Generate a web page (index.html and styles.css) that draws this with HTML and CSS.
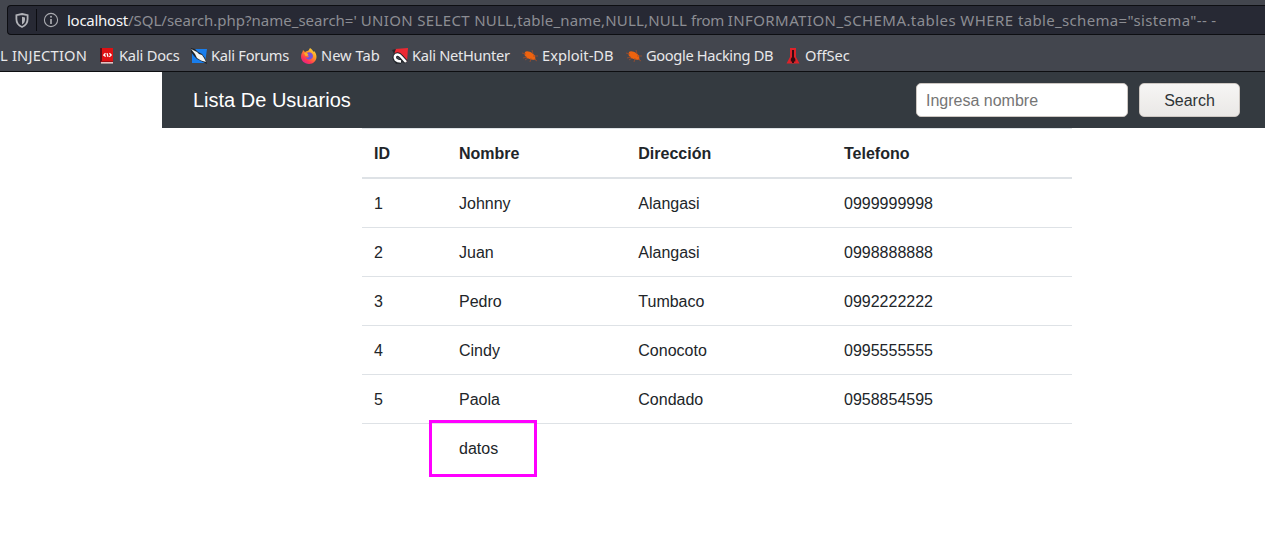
FILE: index.html
```html
<!DOCTYPE html>
<html lang="es">
<head>
<meta charset="utf-8">
<title>Lista De Usuarios</title>
<link rel="stylesheet" href="styles.css">
</head>
<body>
<header class="browser">
  <div class="urlbar">
    <svg class="shield" width="14" height="15" viewBox="0 0 14 15"><path d="M7 1 L12.6 2.2 V6 C12.6 9.8 10.8 12.5 7 14 C3.2 12.5 1.4 9.8 1.4 6 V2.2Z" fill="none" stroke="#b2b3b8" stroke-width="1.8"/><path d="M7 3.7 L10 4.4 V6.4 C10 8.6 9 10.3 7 11.4Z" fill="#b2b3b8"/></svg>
    <span class="divider"></span>
    <svg class="info" width="16" height="16" viewBox="0 0 16 16"><circle cx="8" cy="8" r="6.6" fill="none" stroke="#aaabb0" stroke-width="1.1"/><circle cx="8" cy="4.7" r="1" fill="#aaabb0"/><path d="M8 7V12" stroke="#aaabb0" stroke-width="1.7"/></svg>
    <span class="url"><b>localhost</b><span>/SQL/search.php?name_search=' </span><span class="select">UNION SELECT </span><span class="columns">NULL,table_name,NULL,NULL </span><span class="from">from </span><span class="schema">INFORMATION_SCHEMA.tables WHERE </span><span class="filter">table_schema="sistema"-- -</span></span>
  </div>
  <nav class="bookmarks">
    <span class="bookmark sql">L INJECTION</span>
    <span class="bookmark docs"><svg viewBox="0 0 16 16"><path d="M1 0h3v14H1z" fill="#5c1019"/><path d="M3 0h11v13H3z" fill="#df1013"/><path d="M2 13h12v1H2z" fill="#a10c12"/><path d="M2 14h12v1.6H2z" fill="#e5c2c2"/><path d="M6.5 5.2L4.8 7.1L6.7 8.5M8 5.2L9 8.9M10.4 5.2L12.2 7.1L10.3 8.9" fill="none" stroke="#fff" stroke-width="1.3"/></svg>Kali Docs</span>
    <span class="bookmark forums"><svg viewBox="0 0 16 16"><path d="M1 1h15l-2 14H1z" fill="#197eed"/><path d="M0 0L4 1L7 4L11 6L14 10L16 16L10 13L6 11L3 8L0 4Z" fill="#20242a"/><path d="M0 1L4 3L6 4L8 6L11 7L13 10L15 14L10 12.5L6 10L4 6Z" fill="#f5f5f2"/></svg>Kali Forums</span>
    <span class="bookmark newtab"><svg viewBox="0 0 16 16"><defs><linearGradient id="fire" x1="1" y1="0" x2=".3" y2="1"><stop offset="0" stop-color="#ffef45"/><stop offset=".45" stop-color="#ff9a25"/><stop offset=".8" stop-color="#ff3653"/><stop offset="1" stop-color="#e52287"/></linearGradient></defs><path d="M9 0C11 1 12 3 12.5 4L13 3C18 8 15 16 8 16C1 16-2 9 1.5 4L2 2L4 4L6 3C8 3 8 1 9 0Z" fill="url(#fire)"/><path d="M6 5C8 3 12 5 12 8C12 12 6 13 4.5 9C5.5 10 7.5 10 8 8C6.5 8 5.5 7.3 6 5Z" fill="#7652d9"/><path d="M3 5L6 5L7.5 7L6 8L4.5 8Z" fill="#ffad27"/></svg>New Tab</span>
    <span class="bookmark hunter"><svg viewBox="0 0 16 16"><path d="M3 1L16 0L15 14L7 9L2 6Z" fill="#ed2932"/><path d="M0 2L4 1L2 6M0 9L4 16L12 14" fill="#26282c"/><path d="M14 14L9 8.5C7 6 4 6 3 8C2 11 4 13.3 9 13.7" fill="none" stroke="#20242a" stroke-width="4.4"/><path d="M14 14L9 8.5C7 6 4 6 3 8C2 11 4 13.3 9 13.5" fill="none" stroke="#fff" stroke-width="2.6"/></svg>Kali NetHunter</span>
    <span class="bookmark exploit"><svg viewBox="0 0 16 16"><path d="M3 4C5 2.5 8 4 10 5L13 7.5L13.5 12L9 11.5L5 10L2.5 7Z" fill="#ef630e"/><path d="M0 5L4 6M1 10L5 9M3 12L6 10M8 14L9 10M11 6L10 2M11 8L16 8M12 11L15 13" stroke="#a54c28" stroke-width=".8"/></svg>Exploit-DB</span>
    <span class="bookmark google"><svg viewBox="0 0 16 16"><path d="M3 4C5 2.5 8 4 10 5L13 7.5L13.5 12L9 11.5L5 10L2.5 7Z" fill="#ef630e"/><path d="M0 5L4 6M1 10L5 9M3 12L6 10M8 14L9 10M11 6L10 2M11 8L16 8M12 11L15 13" stroke="#a54c28" stroke-width=".8"/></svg>Google Hacking DB</span>
    <span class="bookmark offsec"><svg viewBox="0 0 16 16"><path d="M5 0h6v9l3.5 6.5h-13L5 9z" fill="#df2229"/><path d="M7 2h2V9l1.3 2v2.5H9V15H7v-1.5H5.8V11L7 9z" fill="#350b10"/></svg>OffSec</span>
  </nav>
</header>
<main class="page">
  <div class="navbar">
    <span class="brand">Lista De Usuarios</span>
    <form class="search"><input type="text" placeholder="Ingresa nombre"><button type="button">Search</button></form>
  </div>
  <table class="users">
    <colgroup><col class="c1"><col class="c2"><col class="c3"><col></colgroup>
    <thead><tr><th>ID</th><th>Nombre</th><th>Dirección</th><th>Telefono</th></tr></thead>
    <tbody>
      <tr><td>1</td><td>Johnny</td><td>Alangasi</td><td>0999999998</td></tr>
      <tr><td>2</td><td>Juan</td><td>Alangasi</td><td>0998888888</td></tr>
      <tr><td>3</td><td>Pedro</td><td>Tumbaco</td><td>0992222222</td></tr>
      <tr><td>4</td><td>Cindy</td><td>Conocoto</td><td>0995555555</td></tr>
      <tr><td>5</td><td>Paola</td><td>Condado</td><td>0958854595</td></tr>
      <tr><td></td><td class="marked">datos</td><td></td><td></td></tr>
    </tbody>
  </table>
</main>
</body>
</html>
```
FILE: styles.css
```css
*, *::before, *::after { box-sizing: border-box; }
html, body { margin: 0; height: 538px; overflow: hidden; background: #fff; }
body { font: 16px/24px "Liberation Sans", Arial, sans-serif; color: #212529; }
.browser { height: 72px; padding-top: 5px; background: #43464e; border-bottom: 1px solid #0d0e11; font-family: "Noto Sans", sans-serif; overflow: hidden; }
.urlbar { display: flex; align-items: center; height: 30px; margin-left: 7px; border: 1px solid #0d0e12; border-right: 0; border-radius: 4px 0 0 4px; background: #272934; }
.shield { margin-left: 7px; flex: none; }
.divider { width: 1px; height: 22px; margin: 0 6px 0 7px; background: #0c0d12; }
.info { flex: none; }
.url { margin-left: 8px; font-size: 15px; white-space: pre; color: #8c8d93; }
.url b { font-weight: 400; color: #f5f5f7; letter-spacing: -.27px; }
.select { letter-spacing: .35px; }
.columns { letter-spacing: .17px; }
.from { letter-spacing: -.3px; }
.schema { letter-spacing: .43px; }
.filter { letter-spacing: .34px; }
.bookmarks { display: flex; align-items: center; height: 36px; padding-top: 3px; }
.bookmark { display: flex; align-items: center; flex: none; height: 24px; font-size: 14.67px; color: #e8e8ea; white-space: nowrap; }
.bookmark svg { width: 16px; height: 16px; margin: 2px 4px 0 0; flex: none; }
.sql { width: 99px; letter-spacing: .22px; }
.docs { width: 92px; letter-spacing: -.2px; }
.forums { width: 110px; letter-spacing: -.27px; }
.newtab { width: 91px; }
.hunter { width: 130px; letter-spacing: -.3px; }
.exploit { width: 104px; }
.google { width: 159px; letter-spacing: -.35px; }
.navbar { display: flex; align-items: center; justify-content: space-between; height: 56px; margin-left: 162px; padding: 0 25px 0 31px; background: #343a40; }
.brand { font-size: 20px; line-height: 30px; color: #fff; }
.search { display: flex; gap: 11px; margin: 0; }
input, button { height: 34px; font: 16px "Liberation Sans", Arial, sans-serif; border: 1px solid #cdc7c2; border-radius: 5px; }
input { width: 212px; padding: 2px 9px 0; background: #fff; }
input::placeholder { color: #757575; opacity: 1; }
button { width: 101px; padding: 2px 0 0; background: linear-gradient(#f6f5f4, #eae8e6); color: #2e3436; }
.users { width: 710px; margin-left: 362px; border-collapse: separate; border-spacing: 0; table-layout: fixed; }
.c1 { width: 85px; }
.c2 { width: 179.3px; }
.c3 { width: 205.7px; }
th, td { height: 49px; padding: 13px 12px 11px; text-align: left; border-top: 1px solid #dee2e6; }
th { height: 51px; border-bottom: 2px solid #dee2e6; }
tbody tr:first-child td { height: 48px; border-top: 0; }
.marked { position: relative; }
.marked::after { content: ""; position: absolute; left: -18px; top: -4px; width: 108px; height: 57px; border: 3px solid #f0f; }
```
